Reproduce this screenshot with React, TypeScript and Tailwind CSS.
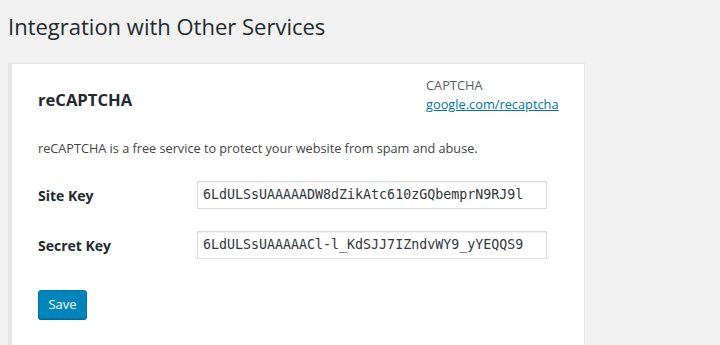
import React from "react";

const mono = { fontFamily: '"DejaVu Sans Mono", monospace' };

function KeyRow({ label, value }: { label: string; value: string }) {
  return (
    <div className="flex items-center">
      <label className="w-[159px] text-[14px] font-bold text-[#23282d]">{label}</label>
      <div
        className="w-[350px] h-[28px] border border-[#ddd] px-[5px] flex items-center text-[13.3px] leading-[18px] text-[#32373c] shadow-[inset_0_1px_2px_rgba(0,0,0,0.07)] whitespace-nowrap"
        style={mono}
      >
        {value}
      </div>
    </div>
  );
}

export default function App() {
  return (
    <div
      className="w-[720px] h-[345px] overflow-hidden bg-[#f1f1f1] text-[#444]"
      style={{ fontFamily: '"Open Sans", "Noto Sans", sans-serif' }}
    >
      <div className="pl-[8px] pt-[12px]">
        <h1 className="text-[22px] leading-[29px] font-normal text-[#23282d]">
          Integration with Other Services
        </h1>
        <div className="mt-[22px] w-[577px] bg-white border border-[#e5e5e5] border-l-4 px-[26px] pt-[12px] pb-[40px]">
          <div className="flex justify-between items-start">
            <h2 className="mt-[14px] text-[16.6px] leading-[20px] font-bold text-[#23282d]">
              reCAPTCHA
            </h2>
            <div className="text-[12.8px] leading-[19px] text-[#555d66] w-[132px]">
              <div>CAPTCHA</div>
              <a href="#" className="text-[#0073aa] underline">
                google.com/recaptcha
              </a>
            </div>
          </div>
          <p className="mt-[25px] text-[12.7px] leading-[19px] text-[#444]">
            reCAPTCHA is a free service to protect your website from spam and abuse.
          </p>
          <div className="mt-[23px] flex flex-col gap-[22px]">
            <KeyRow label="Site Key" value="6LdULSsUAAAAADW8dZikAtc610zGQbemprN9RJ9l" />
            <KeyRow label="Secret Key" value="6LdULSsUAAAAACl-l_KdSJJ7IZndvWY9_yYEQQS9" />
          </div>
          <button className="mt-[31px] h-[29px] w-[49px] rounded-[3px] bg-[#0085ba] border border-[#0073aa] text-white text-[13px] shadow-[0_1px_0_#006799]">
            Save
          </button>
        </div>
      </div>
    </div>
  );
}
